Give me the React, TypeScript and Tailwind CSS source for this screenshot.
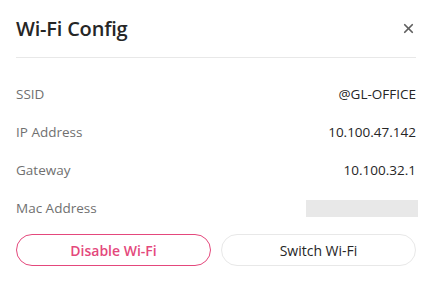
import { X } from 'lucide-react';

const rows = [
  { label: 'SSID', value: '@GL-OFFICE' },
  { label: 'IP Address', value: '10.100.47.142' },
  { label: 'Gateway', value: '10.100.32.1' },
];

export default function App() {
  return (
    <div className="w-[432px] h-[283px] bg-white px-4 font-['Open_Sans',sans-serif]">
      {/* Header */}
      <div className="h-[58px] flex items-center justify-between border-b border-[#e8e8e8]">
        <h1 className="text-[20px] font-semibold text-[#262626] tracking-[-0.2px] pt-[1px]">Wi-Fi Config</h1>
        <button className="w-6 h-6 mr-[-4px] flex items-center justify-center text-[#5f5f5f]">
          <X className="w-[15px] h-[15px]" strokeWidth={2.8} />
        </button>
      </div>

      {/* Details */}
      <div className="pt-[17px]">
        {rows.map(r => (
          <div key={r.label} className="h-[38px] flex items-center justify-between text-[13.5px]">
            <span className="text-[#707070]">{r.label}</span>
            <span className="text-[#262626]">{r.value}</span>
          </div>
        ))}
        <div className="h-[38px] flex items-center justify-between text-[13.5px]">
          <span className="text-[#707070]">Mac Address</span>
          <span className="w-[112px] h-[17px] bg-[#e8e8e8] -mr-[2px]" />
        </div>
      </div>

      {/* Actions */}
      <div className="mt-[7px] grid grid-cols-2 gap-[10px]">
        <button className="h-8 rounded-full border border-[#e4487c] text-[#e4487c] text-[14px] font-semibold">
          Disable Wi-Fi
        </button>
        <button className="h-8 rounded-full border border-[#e8e8e8] text-[#262626] text-[14px]">
          Switch Wi-Fi
        </button>
      </div>
    </div>
  );
}
